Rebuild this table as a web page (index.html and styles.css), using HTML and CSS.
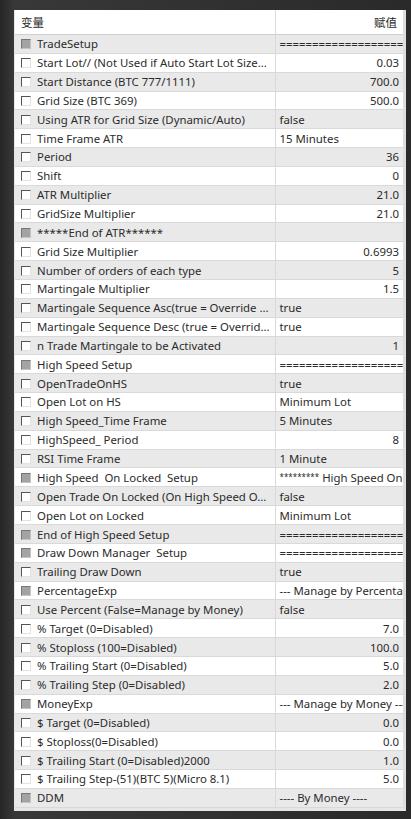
FILE: index.html
```html
<!DOCTYPE html>
<html lang="zh">
<head>
    <meta charset="UTF-8">
    <meta name="viewport" content="width=device-width, initial-scale=1.0">
    <title>输入参数</title>
    <link rel="stylesheet" href="styles.css">
</head>
<body>
    <div class="screen">
        <div class="panel">
            <table class="params">
                <colgroup>
                    <col class="col-name">
                    <col class="col-value">
                </colgroup>
                <thead>
                    <tr>
                        <th class="h-name">变量</th>
                        <th class="h-value">赋值</th>
                    </tr>
                </thead>
                <tbody>
                    <tr class="group"><td><span class="box"></span>TradeSetup</td><td class="txt">==============================</td></tr>
                    <tr><td><span class="box"></span>Start Lot// (Not Used if Auto Start Lot Size...</td><td class="num">0.03</td></tr>
                    <tr><td><span class="box"></span>Start Distance (BTC 777/1111)</td><td class="num">700.0</td></tr>
                    <tr><td><span class="box"></span>Grid Size (BTC 369)</td><td class="num">500.0</td></tr>
                    <tr><td><span class="box"></span>Using ATR for Grid Size (Dynamic/Auto)</td><td class="txt">false</td></tr>
                    <tr><td><span class="box"></span>Time Frame ATR</td><td class="txt">15 Minutes</td></tr>
                    <tr><td><span class="box"></span>Period</td><td class="num">36</td></tr>
                    <tr><td><span class="box"></span>Shift</td><td class="num">0</td></tr>
                    <tr><td><span class="box"></span>ATR Multiplier</td><td class="num">21.0</td></tr>
                    <tr><td><span class="box"></span>GridSize Multiplier</td><td class="num">21.0</td></tr>
                    <tr class="group"><td><span class="box"></span>*****End of ATR******</td><td class="txt"></td></tr>
                    <tr><td><span class="box"></span>Grid Size Multiplier</td><td class="num">0.6993</td></tr>
                    <tr><td><span class="box"></span>Number of orders of each type</td><td class="num">5</td></tr>
                    <tr><td><span class="box"></span>Martingale Multiplier</td><td class="num">1.5</td></tr>
                    <tr><td><span class="box"></span>Martingale Sequence Asc(true = Override ...</td><td class="txt">true</td></tr>
                    <tr><td><span class="box"></span>Martingale Sequence Desc (true = Overrid...</td><td class="txt">true</td></tr>
                    <tr><td><span class="box"></span>n Trade Martingale to be Activated</td><td class="num">1</td></tr>
                    <tr class="group"><td><span class="box"></span>High Speed Setup</td><td class="txt">==============================</td></tr>
                    <tr><td><span class="box"></span>OpenTradeOnHS</td><td class="txt">true</td></tr>
                    <tr><td><span class="box"></span>Open Lot on HS</td><td class="txt">Minimum Lot</td></tr>
                    <tr><td><span class="box"></span>High Speed_Time Frame</td><td class="txt">5 Minutes</td></tr>
                    <tr><td><span class="box"></span>HighSpeed_ Period</td><td class="num">8</td></tr>
                    <tr><td><span class="box"></span>RSI Time Frame</td><td class="txt">1 Minute</td></tr>
                    <tr class="group"><td><span class="box"></span>High Speed&nbsp; On Locked&nbsp; Setup</td><td class="txt"><span class="stars">*********</span> High Speed On Locked</td></tr>
                    <tr><td><span class="box"></span>Open Trade On Locked (On High Speed O...</td><td class="txt">false</td></tr>
                    <tr><td><span class="box"></span>Open Lot on Locked</td><td class="txt">Minimum Lot</td></tr>
                    <tr class="group"><td><span class="box"></span>End of High Speed Setup</td><td class="txt">==============================</td></tr>
                    <tr class="group"><td><span class="box"></span>Draw Down Manager&nbsp; Setup</td><td class="txt">==============================</td></tr>
                    <tr><td><span class="box"></span>Trailing Draw Down</td><td class="txt">true</td></tr>
                    <tr class="group"><td><span class="box"></span>PercentageExp</td><td class="txt">--- Manage by Percentage ---</td></tr>
                    <tr><td><span class="box"></span>Use Percent (False=Manage by Money)</td><td class="txt">false</td></tr>
                    <tr><td><span class="box"></span>% Target (0=Disabled)</td><td class="num">7.0</td></tr>
                    <tr><td><span class="box"></span>% Stoploss (100=Disabled)</td><td class="num">100.0</td></tr>
                    <tr><td><span class="box"></span>% Trailing Start (0=Disabled)</td><td class="num">5.0</td></tr>
                    <tr><td><span class="box"></span>% Trailing Step (0=Disabled)</td><td class="num">2.0</td></tr>
                    <tr class="group"><td><span class="box"></span>MoneyExp</td><td class="txt">--- Manage by Money ---</td></tr>
                    <tr><td><span class="box"></span>$ Target (0=Disabled)</td><td class="num">0.0</td></tr>
                    <tr><td><span class="box"></span>$ Stoploss(0=Disabled)</td><td class="num">0.0</td></tr>
                    <tr><td><span class="box"></span>$ Trailing Start (0=Disabled)2000</td><td class="num">1.0</td></tr>
                    <tr><td><span class="box"></span>$ Trailing Step-(51)(BTC 5)(Micro 8.1)</td><td class="num">5.0</td></tr>
                    <tr class="group"><td><span class="box"></span>DDM</td><td class="txt">---- By Money ----</td></tr>
                </tbody>
            </table>
        </div>
    </div>
</body>
</html>
```

FILE: styles.css
```css
body {
    margin: 0;
    background: #2e2e2e;
    font-family: "Noto Sans", "Noto Sans CJK SC", sans-serif;
    font-size: 11.4px;
    color: #2b2b2b;
}

.screen {
    width: 411px;
    height: 819px;
    overflow: hidden;
    padding: 10px 0 0 14px;
    box-sizing: border-box;
    background: linear-gradient(to right, #262626 0, #383838 14px, #2a2a2a 100%);
}

.panel {
    width: 388px;
    background: #fff;
    border-right: 3px solid #dedede;
    border-bottom: 3px solid #e6e6e6;
    border-left: 1px solid #e6e6e6;
    box-sizing: content-box;
}

.params {
    width: 388px;
    table-layout: fixed;
    border-collapse: collapse;
}

.col-name {
    width: 260px;
}

.col-value {
    width: 128px;
}

.params th {
    height: 24px;
    padding: 0 6px;
    font-weight: normal;
    font-family: "Noto Sans CJK SC", sans-serif;
    font-size: 11.5px;
    border-bottom: 1px solid #cfcfcf;
    background: #fff;
}

.h-name {
    text-align: left;
}

.h-value {
    text-align: right;
    border-left: 1px solid #dcdcdc;
}

.params td {
    height: 18.85px;
    padding: 0 4px;
    white-space: nowrap;
    overflow: hidden;
    border-bottom: 1px solid #d9d9d9;
    line-height: 17px;
    box-sizing: border-box;
}

.params td + td {
    border-left: 1px solid #d9d9d9;
}

.params tbody tr:nth-child(odd) {
    background: #e9e9e9;
}

.params tbody tr:nth-child(even) {
    background: #fff;
}

.params td:first-child {
    padding-left: 6px;
}

.num {
    text-align: right;
}

.txt {
    text-align: left;
    text-overflow: clip;
}

.box {
    display: inline-block;
    width: 10px;
    height: 10px;
    margin-right: 6px;
    vertical-align: -1px;
    box-sizing: border-box;
    background: #fff;
    border-top: 1px solid #555;
    border-left: 1px solid #555;
    border-right: 1px solid #e2e2e2;
    border-bottom: 1px solid #e2e2e2;
}

.group .box {
    background: #a3a3a3;
    border-top-color: #777;
    border-left-color: #777;
    border-right-color: #c4c4c4;
    border-bottom-color: #c4c4c4;
}

.stars {
    font-size: 8px;
    vertical-align: 2px;
}
```
